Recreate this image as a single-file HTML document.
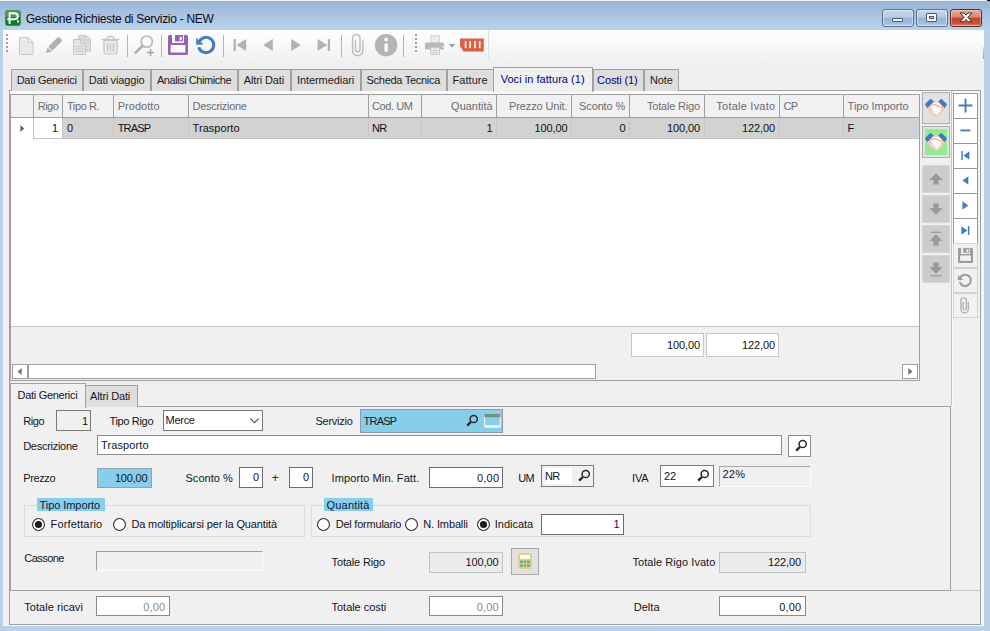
<!DOCTYPE html>
<html><head><meta charset="utf-8"><title>Gestione Richieste di Servizio - NEW</title>
<style>
html,body{margin:0;padding:0;}
body{width:990px;height:631px;overflow:hidden;position:relative;background:#b9d1ea;font-family:"Liberation Sans", sans-serif;}
.b{position:absolute;box-sizing:border-box;display:block;}
.t{position:absolute;white-space:pre;font-family:"Liberation Sans", sans-serif;}
</style></head><body>
<div class="b" style="left:0px;top:0px;width:990px;height:31px;background:linear-gradient(#98b3d3 0px,#9eb9d8 7px,#a4bfdd 9.5px,#afc8e4 20px,#b9d2ec 30px);"></div>
<div class="b" style="left:0px;top:0px;width:990px;height:1px;background:#eef3fa;"></div>
<div class="b" style="left:987px;top:0px;width:3px;height:1px;background:#0c1418;"></div>
<div class="b" style="left:988px;top:1px;width:2px;height:1px;background:#8fb5c8;"></div>
<svg class="b" style="left:5px;top:10px" width="16" height="16" viewBox="0 0 16 16"><rect x="0.3" y="0.3" width="15.4" height="15.4" rx="2" fill="#127a2e"/>
<path d="M0.3 7V2.3a2 2 0 0 1 2-2h11.4a2 2 0 0 1 2 2V7z" fill="#4f9a57"/>
<path d="M4.6 14V3.2h4.6c2.6 0 3.6 1.3 3.6 3s-1 3-3.6 3H2.2" fill="none" stroke="#fff" stroke-width="1.9"/>
<rect x="12" y="10.4" width="2" height="2" fill="#fff"/></svg>
<div class="b" style="left:882px;top:9px;width:32px;height:18px;border:1px solid #5c6f8c;border-radius:3px;background:linear-gradient(#c3d6ee 0,#b5cbe7 45%,#98b3d4 50%,#a3bddb 85%,#b9d0ea 100%);box-shadow:inset 0 0 0 1px rgba(255,255,255,.45);"></div>
<div class="b" style="left:916px;top:9px;width:32px;height:18px;border:1px solid #5c6f8c;border-radius:3px;background:linear-gradient(#c3d6ee 0,#b5cbe7 45%,#98b3d4 50%,#a3bddb 85%,#b9d0ea 100%);box-shadow:inset 0 0 0 1px rgba(255,255,255,.45);"></div>
<div class="b" style="left:950px;top:9px;width:32px;height:18px;border:1px solid #5a2a2a;border-radius:3px;background:linear-gradient(#e9a99a 0,#d98472 45%,#c2432a 50%,#c8553a 85%,#dc8a72 100%);box-shadow:inset 0 0 0 1px rgba(255,255,255,.35);"></div>
<div class="b" style="left:892px;top:18px;width:11px;height:4px;background:#f4f4f4;border:1px solid #4e5b70;border-radius:1px;"></div>
<div class="b" style="left:926px;top:13px;width:11px;height:9px;background:#f4f4f4;border:1px solid #4e5b70;border-radius:1px;"></div>
<div class="b" style="left:929px;top:16px;width:5px;height:3px;background:#a9c0dd;border:1px solid #4e5b70;"></div>
<svg class="b" style="left:959px;top:12px" width="14" height="11" viewBox="0 0 14 11"><path d="M1.2 1h3.9l1.9 2.1 1.9-2.1h3.9L8.9 5.3 12.8 9.7H8.9L7 7.5 5.1 9.7H1.2l3.9-4.4z" fill="#f8f8f8" stroke="#4a3038" stroke-width="1"/></svg>
<div class="b" style="left:3px;top:30px;width:981px;height:596px;background:#f0f0f0;"></div>
<div class="b" style="left:3px;top:30px;width:981px;height:33px;background:linear-gradient(#fdfdfd 0,#f9f9f9 40%,#f0f0f0 100%);"></div>
<div class="b" style="left:983px;top:47px;width:1px;height:12px;background:linear-gradient(#d8d8d8,#9a9a9a);"></div>
<div class="b" style="left:981px;top:90px;width:3px;height:536px;background:#f6f6f6;"></div>
<div class="b" style="left:3px;top:625px;width:981px;height:1px;background:#f8f8f8;"></div>
<div class="b" style="left:6px;top:34px;width:2px;height:2px;background:#a0a0a0;"></div>
<div class="b" style="left:6px;top:38px;width:2px;height:2px;background:#a0a0a0;"></div>
<div class="b" style="left:6px;top:42px;width:2px;height:2px;background:#a0a0a0;"></div>
<div class="b" style="left:6px;top:46px;width:2px;height:2px;background:#a0a0a0;"></div>
<div class="b" style="left:6px;top:50px;width:2px;height:2px;background:#a0a0a0;"></div>
<div class="b" style="left:415px;top:34px;width:2px;height:2px;background:#a0a0a0;"></div>
<div class="b" style="left:415px;top:38px;width:2px;height:2px;background:#a0a0a0;"></div>
<div class="b" style="left:415px;top:42px;width:2px;height:2px;background:#a0a0a0;"></div>
<div class="b" style="left:415px;top:46px;width:2px;height:2px;background:#a0a0a0;"></div>
<div class="b" style="left:415px;top:50px;width:2px;height:2px;background:#a0a0a0;"></div>
<svg class="b" style="left:18px;top:36px" width="17" height="20" viewBox="0 0 17 20"><path d="M1.5 1.5h8.5l5 5v12h-13.5z" fill="#e9e9e9" stroke="#c9c9c9"/><path d="M10 1.5v5h5z" fill="#f6f6f6" stroke="#c9c9c9"/></svg>
<svg class="b" style="left:44px;top:35px" width="20" height="20" viewBox="0 0 20 20"><g transform="translate(9.4,10.6) rotate(45)"><path d="M-2.8 -8.6a1.4 1.4 0 0 1 1.4-1.4h2.8a1.4 1.4 0 0 1 1.4 1.4V4.4h-5.6z" fill="#b0b0b0"/><path d="M-2.8 5.4h5.6L0 10.6z" fill="#b0b0b0"/></g></svg>
<svg class="b" style="left:72px;top:34px" width="20" height="22" viewBox="0 0 20 22"><path d="M6.5 1.5h7.5l4.5 4.5v11h-12z" fill="#dcdcdc" stroke="#c6c6c6"/><path d="M14 1.5v4.5h4.5z" fill="#ededed" stroke="#c6c6c6"/>
<path d="M1.5 5.5h7.5l4.5 4.5v10.5h-12z" fill="#e4e4e4" stroke="#c6c6c6"/><path d="M9 5.5v4.5h4.5z" fill="#f1f1f1" stroke="#c6c6c6"/>
<path d="M3.5 12.5h8M3.5 15h8M3.5 17.5h8" stroke="#c8c8c8" stroke-width="1.2"/></svg>
<svg class="b" style="left:101px;top:35px" width="19" height="20" viewBox="0 0 19 20"><path d="M0.5 4.5h18" stroke="#c4c4c4" stroke-width="1.3"/><path d="M6 4.2c0-2 1-2.7 3.5-2.7s3.5 0.7 3.5 2.7" fill="none" stroke="#c4c4c4" stroke-width="1.3"/>
<path d="M3 5.5h13v11.5a2 2 0 0 1-2 2h-9a2 2 0 0 1-2-2z" fill="#ececec" stroke="#c4c4c4" stroke-width="1.2"/>
<path d="M6.6 8v8.5M9.5 8v8.5M12.4 8v8.5" stroke="#c4c4c4" stroke-width="1.4"/></svg>
<div class="b" style="left:127px;top:35px;width:1px;height:22px;background:#b4b4b4;"></div>
<div class="b" style="left:161px;top:35px;width:1px;height:22px;background:#b4b4b4;"></div>
<div class="b" style="left:223px;top:35px;width:1px;height:22px;background:#b4b4b4;"></div>
<div class="b" style="left:341px;top:35px;width:1px;height:22px;background:#b4b4b4;"></div>
<div class="b" style="left:403px;top:35px;width:1px;height:22px;background:#b4b4b4;"></div>
<svg class="b" style="left:134px;top:34px" width="21" height="22" viewBox="0 0 21 22"><circle cx="12.8" cy="7.6" r="5.6" fill="#fbfbfb" stroke="#b9b9b9" stroke-width="1.7"/>
<path d="M8.6 11.8L1.6 18.6" stroke="#b0b0b0" stroke-width="2.6" stroke-linecap="round"/>
<path d="M13 18.5h7M16.5 15v7" stroke="#a8a8a8" stroke-width="1.5"/></svg>
<svg class="b" style="left:168px;top:35px" width="20" height="20" viewBox="0 0 20 20"><path d="M1.6 0h16.8a1.6 1.6 0 0 1 1.6 1.6v16.8a1.6 1.6 0 0 1-1.6 1.6h-16.8a1.6 1.6 0 0 1-1.6-1.6v-16.8a1.6 1.6 0 0 1 1.6-1.6z" fill="#9661b0"/>
<rect x="4" y="0" width="12" height="8" fill="#fcfcfc"/><rect x="7" y="0" width="8" height="6.4" fill="#9661b0"/><rect x="11.6" y="1.8" width="2.2" height="3.6" fill="#fcfcfc"/>
<rect x="2.6" y="10" width="14.8" height="7.5" fill="#fcfcfc"/></svg>
<svg class="b" style="left:195px;top:35px" width="22" height="21" viewBox="0 0 22 21"><path d="M4.4 6.2A7.65 7.65 0 1 1 3.74 12.24" fill="none" stroke="#437fbc" stroke-width="3.1"/>
<path d="M1.2 2.7V9.8L8.7 9.6z" fill="#437fbc"/></svg>
<svg class="b" style="left:233px;top:39px" width="14" height="12" viewBox="0 0 14 12"><rect x="0.6" y="0" width="2.2" height="12" fill="#b2b2b2"/><path d="M13.2 0v12L3.6 6z" fill="#b2b2b2"/></svg>
<svg class="b" style="left:263px;top:39px" width="10" height="12" viewBox="0 0 10 12"><path d="M9.8 0v12L0.2 6z" fill="#b2b2b2"/></svg>
<svg class="b" style="left:291px;top:39px" width="10" height="12" viewBox="0 0 10 12"><path d="M0.2 0v12L9.8 6z" fill="#b2b2b2"/></svg>
<svg class="b" style="left:317px;top:39px" width="14" height="12" viewBox="0 0 14 12"><rect x="10.8" y="0" width="2.2" height="12" fill="#b2b2b2"/><path d="M0.6 0v12L10.2 6z" fill="#b2b2b2"/></svg>
<svg class="b" style="left:350px;top:32px" width="16" height="26" viewBox="0 0 16 26"><path d="M5.5 8.3V17.4A2.25 2.25 0 0 0 10 17.4V6.2A3.75 3.75 0 0 0 2.5 6.2V18.6A5.15 5.15 0 0 0 12.8 18.6V8.3" fill="none" stroke="#bcbcbc" stroke-width="1.4"/></svg>
<svg class="b" style="left:374px;top:33px" width="24" height="24" viewBox="0 0 24 24"><circle cx="12.1" cy="12.2" r="11.2" fill="#b4b4b4"/><rect x="10.5" y="10.6" width="3.4" height="8.2" fill="#fbfbfb"/><circle cx="12.1" cy="6.4" r="1.9" fill="#fbfbfb"/></svg>
<svg class="b" style="left:424px;top:35px" width="23" height="20" viewBox="0 0 23 20"><rect x="6.7" y="0.8" width="8.8" height="7" fill="#ececec" stroke="#d2d2d2"/>
<path d="M2.6 7.4h15.8a1.6 1.6 0 0 1 1.6 1.6v5.6h-19V9a1.6 1.6 0 0 1 1.6-1.6z" fill="#b9b9b9"/>
<rect x="6.7" y="12.7" width="8.8" height="6.6" fill="#ededed" stroke="#c6c6c6"/><path d="M8.4 15.2h5.4M8.4 17.3h5.4" stroke="#c6c6c6" stroke-width="0.9"/><rect x="18" y="11.4" width="1.4" height="1.4" fill="#f4f4f4"/></svg>
<svg class="b" style="left:449px;top:44px" width="6" height="4" viewBox="0 0 6 4"><path d="M0 0h6L3 3.4z" fill="#9a9a9a"/></svg>
<svg class="b" style="left:460px;top:38px" width="24" height="15" viewBox="0 0 24 15"><path d="M0 0.4h23.8v12.6a0.6 0.6 0 0 1-0.6 0.6h-1l-0.5 0.7-0.6-0.7H3.6L0 7.9z" fill="#d96140"/>
<path d="M5.6 3v7.2M10.1 3v7.2M15 3v7.2M19.7 3v7.2" stroke="#fdf3ee" stroke-width="1.7"/></svg>
<div class="b" style="left:488px;top:30px;width:1px;height:29px;background:#dedede;"></div>
<div class="b" style="left:412px;top:31px;width:1px;height:28px;background:#f4f4f4;"></div>
<div class="b" style="left:9px;top:90px;width:972px;height:535px;background:#f0f0f0;border:1px solid #a0a0a0;"></div>
<div class="b" style="left:10px;top:91px;width:970px;height:3px;background:#f9f9f9;"></div>
<div class="b" style="left:11px;top:69px;width:72px;height:22px;background:#dedede;border:1px solid #a0a0a0;border-bottom:none;"></div>
<div class="b" style="left:83px;top:69px;width:68px;height:22px;background:#dedede;border:1px solid #a0a0a0;border-bottom:none;"></div>
<div class="b" style="left:151px;top:69px;width:87px;height:22px;background:#dedede;border:1px solid #a0a0a0;border-bottom:none;"></div>
<div class="b" style="left:238px;top:69px;width:53px;height:22px;background:#dedede;border:1px solid #a0a0a0;border-bottom:none;"></div>
<div class="b" style="left:291px;top:69px;width:70px;height:22px;background:#dedede;border:1px solid #a0a0a0;border-bottom:none;"></div>
<div class="b" style="left:361px;top:69px;width:86px;height:22px;background:#dedede;border:1px solid #a0a0a0;border-bottom:none;"></div>
<div class="b" style="left:447px;top:69px;width:47px;height:22px;background:#dedede;border:1px solid #a0a0a0;border-bottom:none;"></div>
<div class="b" style="left:593px;top:69px;width:51px;height:22px;background:#dedede;border:1px solid #a0a0a0;border-bottom:none;"></div>
<div class="b" style="left:644px;top:69px;width:35px;height:22px;background:#dedede;border:1px solid #a0a0a0;border-bottom:none;"></div>
<div class="b" style="left:493px;top:67px;width:100px;height:25px;background:#f0f0f0;border:1px solid #a0a0a0;border-bottom:none;"></div>
<div class="b" style="left:10px;top:94px;width:910px;height:287px;background:#fff;border:1px solid #a0a0a0;"></div>
<div class="b" style="left:11px;top:95px;width:908px;height:22px;background:#f1f1f1;"></div>
<div class="b" style="left:11px;top:117px;width:908px;height:1px;background:#a0a0a0;"></div>
<div class="b" style="left:33px;top:95px;width:1px;height:22px;background:#a0a0a0;"></div>
<div class="b" style="left:62px;top:95px;width:1px;height:22px;background:#a0a0a0;"></div>
<div class="b" style="left:113px;top:95px;width:1px;height:22px;background:#a0a0a0;"></div>
<div class="b" style="left:188px;top:95px;width:1px;height:22px;background:#a0a0a0;"></div>
<div class="b" style="left:368px;top:95px;width:1px;height:22px;background:#a0a0a0;"></div>
<div class="b" style="left:421px;top:95px;width:1px;height:22px;background:#a0a0a0;"></div>
<div class="b" style="left:496px;top:95px;width:1px;height:22px;background:#a0a0a0;"></div>
<div class="b" style="left:571px;top:95px;width:1px;height:22px;background:#a0a0a0;"></div>
<div class="b" style="left:629px;top:95px;width:1px;height:22px;background:#a0a0a0;"></div>
<div class="b" style="left:704px;top:95px;width:1px;height:22px;background:#a0a0a0;"></div>
<div class="b" style="left:779px;top:95px;width:1px;height:22px;background:#a0a0a0;"></div>
<div class="b" style="left:843px;top:95px;width:1px;height:22px;background:#a0a0a0;"></div>
<div class="b" style="left:62px;top:118px;width:857px;height:20px;background:#d2d2d2;"></div>
<div class="b" style="left:33px;top:138px;width:886px;height:1px;background:#c4c4c4;"></div>
<div class="b" style="left:113px;top:118px;width:1px;height:20px;background:#c6c6c6;"></div>
<div class="b" style="left:188px;top:118px;width:1px;height:20px;background:#c6c6c6;"></div>
<div class="b" style="left:368px;top:118px;width:1px;height:20px;background:#c6c6c6;"></div>
<div class="b" style="left:421px;top:118px;width:1px;height:20px;background:#c6c6c6;"></div>
<div class="b" style="left:496px;top:118px;width:1px;height:20px;background:#c6c6c6;"></div>
<div class="b" style="left:571px;top:118px;width:1px;height:20px;background:#c6c6c6;"></div>
<div class="b" style="left:629px;top:118px;width:1px;height:20px;background:#c6c6c6;"></div>
<div class="b" style="left:704px;top:118px;width:1px;height:20px;background:#c6c6c6;"></div>
<div class="b" style="left:779px;top:118px;width:1px;height:20px;background:#c6c6c6;"></div>
<div class="b" style="left:843px;top:118px;width:1px;height:20px;background:#c6c6c6;"></div>
<div class="b" style="left:33px;top:118px;width:1px;height:21px;background:#c4c4c4;"></div>
<div class="b" style="left:62px;top:118px;width:1px;height:20px;background:#c4c4c4;"></div>
<svg class="b" style="left:20px;top:125px" width="5" height="7" viewBox="0 0 5 7"><path d="M0.3 0v7L4.3 3.5z" fill="#666"/></svg>
<div class="b" style="left:11px;top:326px;width:908px;height:54px;background:#f0f0f0;"></div>
<div class="b" style="left:11px;top:326px;width:908px;height:1px;background:#c8c8c8;"></div>
<div class="b" style="left:631px;top:333px;width:73px;height:24px;background:#fff;border:1px solid #c6c6c6;"></div>
<div class="b" style="left:706px;top:333px;width:73px;height:24px;background:#fff;border:1px solid #c6c6c6;"></div>
<div class="b" style="left:12px;top:364px;width:16px;height:15px;background:#fff;border:1px solid #a0a0a0;"></div>
<div class="b" style="left:28px;top:364px;width:568px;height:15px;background:#fff;border:1px solid #a0a0a0;"></div>
<div class="b" style="left:902px;top:364px;width:16px;height:15px;background:#fff;border:1px solid #a0a0a0;"></div>
<svg class="b" style="left:17px;top:368px" width="5" height="7" viewBox="0 0 5 7"><path d="M4.7 0v7L0.5 3.5z" fill="#707070"/></svg>
<svg class="b" style="left:908px;top:368px" width="5" height="7" viewBox="0 0 5 7"><path d="M0.3 0v7L4.5 3.5z" fill="#707070"/></svg>
<div class="b" style="left:922px;top:92px;width:28px;height:32px;background:#e1e1e1;border:1px solid #adadad;"></div>
<svg class="b" style="left:924px;top:98px" width="24" height="20" viewBox="0 0 24 20"><path d="M0.85 6.3L6.55 0.8 10 3.4 3.4 10.3z" fill="#4579b8"/><path d="M23.1 6.3L17.4 0.8 14 3.4 20.6 10.3z" fill="#4579b8"/>
<path d="M3.4 10.3L10 3.5h4.1L20.6 10.3 19.7 12.9 17.7 15.2 14.8 17.8 12.8 18.9c-0.5 0.2-1 0.1-1.4-0.2L7.4 16.1 4.6 13.2z" fill="#efc9bc"/>
<path d="M8.6 5.4L14.6 4.4 18 8.6 16.6 12.6 12.5 17.2 9.2 12.8 7.2 8.6z" fill="#fffdfc"/>
<path d="M8.2 8c1.2-1.7 3.1-2.1 4.5-0.7l1.5 0.9c1.4 0.2 2.7 0.5 3.9 1" fill="none" stroke="#e0a896" stroke-width="1.1"/>
<path d="M5.6 11.4l3.2 4.6M7.2 10.6l3.8 5.6M14.4 16.6l3-3.4M16 11.6l1.6 1.8" fill="none" stroke="#fff" stroke-width="0.7" stroke-dasharray="1 1.1"/></svg>
<div class="b" style="left:922px;top:126px;width:28px;height:32px;background:#e1e1e1;border:1px solid #adadad;"></div>
<div class="b" style="left:925px;top:129px;width:22px;height:26px;background:#90ee90;"></div>
<svg class="b" style="left:924px;top:131.5px" width="24" height="20" viewBox="0 0 24 20"><path d="M0.85 6.3L6.55 0.8 10 3.4 3.4 10.3z" fill="#4579b8"/><path d="M23.1 6.3L17.4 0.8 14 3.4 20.6 10.3z" fill="#4579b8"/>
<path d="M3.4 10.3L10 3.5h4.1L20.6 10.3 19.7 12.9 17.7 15.2 14.8 17.8 12.8 18.9c-0.5 0.2-1 0.1-1.4-0.2L7.4 16.1 4.6 13.2z" fill="#efc9bc"/>
<path d="M8.6 5.4L14.6 4.4 18 8.6 16.6 12.6 12.5 17.2 9.2 12.8 7.2 8.6z" fill="#fffdfc"/>
<path d="M8.2 8c1.2-1.7 3.1-2.1 4.5-0.7l1.5 0.9c1.4 0.2 2.7 0.5 3.9 1" fill="none" stroke="#e0a896" stroke-width="1.1"/>
<path d="M5.6 11.4l3.2 4.6M7.2 10.6l3.8 5.6M14.4 16.6l3-3.4M16 11.6l1.6 1.8" fill="none" stroke="#fff" stroke-width="0.7" stroke-dasharray="1 1.1"/></svg>
<div class="b" style="left:922px;top:165px;width:28px;height:28px;background:#cccccc;border:1px solid #d6d6d6;"></div>
<div class="b" style="left:922px;top:195px;width:28px;height:28px;background:#cccccc;border:1px solid #d6d6d6;"></div>
<div class="b" style="left:922px;top:225px;width:28px;height:28px;background:#cccccc;border:1px solid #d6d6d6;"></div>
<div class="b" style="left:922px;top:255px;width:28px;height:28px;background:#cccccc;border:1px solid #d6d6d6;"></div>
<svg class="b" style="left:929px;top:173px" width="14" height="12" viewBox="0 0 14 12"><path d="M7 0.3L0.2 7h4.2v4.6h5.2V7h4.2z" fill="#9a9a9a"/></svg>
<svg class="b" style="left:929px;top:203px" width="14" height="12" viewBox="0 0 14 12"><path d="M7 11.7L0.2 5h4.2V0.4h5.2V5h4.2z" fill="#9a9a9a"/></svg>
<svg class="b" style="left:929px;top:231px" width="14" height="15" viewBox="0 0 14 15"><rect x="1.5" y="0.6" width="11" height="1.3" fill="#9a9a9a"/><path d="M7 3.3L0.2 10h4.2v4.6h5.2V10h4.2z" fill="#9a9a9a"/></svg>
<svg class="b" style="left:929px;top:262px" width="14" height="15" viewBox="0 0 14 15"><rect x="1.5" y="13.1" width="11" height="1.3" fill="#9a9a9a"/><path d="M7 11.7L0.2 5h4.2V0.4h5.2V5h4.2z" fill="#9a9a9a"/></svg>
<div class="b" style="left:951px;top:91px;width:1px;height:315px;background:#c4c4c4;"></div>
<div class="b" style="left:952px;top:91px;width:1px;height:315px;background:#fafafa;"></div>
<div class="b" style="left:953px;top:93px;width:25px;height:151px;background:#fff;border:1px solid #9a9a9a;"></div>
<div class="b" style="left:954px;top:118px;width:23px;height:1px;background:#989898;"></div>
<div class="b" style="left:954px;top:143px;width:23px;height:1px;background:#989898;"></div>
<div class="b" style="left:954px;top:168px;width:23px;height:1px;background:#989898;"></div>
<div class="b" style="left:954px;top:193px;width:23px;height:1px;background:#989898;"></div>
<div class="b" style="left:954px;top:218px;width:23px;height:1px;background:#989898;"></div>
<svg class="b" style="left:958px;top:98px" width="15" height="15" viewBox="0 0 15 15"><path d="M0.6 7.5h13.8M7.5 0.6v13.8" stroke="#427fc2" stroke-width="1.9"/></svg>
<svg class="b" style="left:960px;top:129px" width="11" height="3" viewBox="0 0 11 3"><rect x="0.4" y="0.5" width="10" height="1.9" fill="#427fc2"/></svg>
<svg class="b" style="left:961px;top:151px" width="9" height="9" viewBox="0 0 9 9"><rect x="0.3" y="0" width="1.5" height="9" fill="#427fc2"/><path d="M8.4 0.2v8.6L2.4 4.5z" fill="#427fc2"/></svg>
<svg class="b" style="left:962px;top:176px" width="7" height="9" viewBox="0 0 7 9"><path d="M6.4 0.2v8.6L0.4 4.5z" fill="#427fc2"/></svg>
<svg class="b" style="left:962px;top:201px" width="7" height="9" viewBox="0 0 7 9"><path d="M0.4 0.2v8.6L6.4 4.5z" fill="#427fc2"/></svg>
<svg class="b" style="left:961px;top:226px" width="9" height="9" viewBox="0 0 9 9"><rect x="6.9" y="0" width="1.5" height="9" fill="#427fc2"/><path d="M0.4 0.2v8.6L6.4 4.5z" fill="#427fc2"/></svg>
<div class="b" style="left:953px;top:243px;width:25px;height:25px;background:#f1f1f1;border:1px solid #d2d2d2;"></div>
<div class="b" style="left:953px;top:268px;width:25px;height:25px;background:#f1f1f1;border:1px solid #d2d2d2;"></div>
<div class="b" style="left:953px;top:293px;width:25px;height:25px;background:#f1f1f1;border:1px solid #d2d2d2;"></div>
<svg class="b" style="left:958px;top:248px" width="15" height="15" viewBox="0 0 15 15"><g transform="scale(0.75)"><path d="M1.6 0h16.8a1.6 1.6 0 0 1 1.6 1.6v16.8a1.6 1.6 0 0 1-1.6 1.6h-16.8a1.6 1.6 0 0 1-1.6-1.6v-16.8a1.6 1.6 0 0 1 1.6-1.6z" fill="#9c9c9c"/>
<rect x="4" y="0" width="12" height="8" fill="#f1f1f1"/><rect x="7" y="0" width="8" height="6.4" fill="#9c9c9c"/><rect x="11.4" y="1.8" width="2.4" height="3.6" fill="#f1f1f1"/>
<rect x="2.8" y="10" width="14.4" height="7.2" fill="#f1f1f1"/></g></svg>
<svg class="b" style="left:957px;top:273px" width="17" height="16" viewBox="0 0 17 16"><g transform="scale(0.74)"><path d="M4.4 6.2A7.65 7.65 0 1 1 3.74 12.24" fill="none" stroke="#9c9c9c" stroke-width="2.9"/>
<path d="M1.2 2.7V9.8L8.7 9.6z" fill="#9c9c9c"/></g></svg>
<svg class="b" style="left:959px;top:296px" width="12" height="18" viewBox="0 0 12 18"><g transform="translate(0.2,0) scale(0.71)"><path d="M5.5 8.3V17.4A2.25 2.25 0 0 0 10 17.4V6.2A3.75 3.75 0 0 0 2.5 6.2V18.6A5.15 5.15 0 0 0 12.8 18.6V8.3" fill="none" stroke="#a4a4a4" stroke-width="1.6"/></g></svg>
<div class="b" style="left:951px;top:590px;width:29px;height:1px;background:#c4c4c4;"></div>
<div class="b" style="left:10px;top:406px;width:941px;height:185px;background:#f0f0f0;border:1px solid #a0a0a0;"></div>
<div class="b" style="left:85px;top:385px;width:53px;height:22px;background:#dedede;border:1px solid #a0a0a0;border-bottom:none;"></div>
<div class="b" style="left:10px;top:383px;width:76px;height:25px;background:#f0f0f0;border:1px solid #a0a0a0;border-bottom:none;"></div>
<div class="b" style="left:56px;top:410px;width:35px;height:21px;background:#f0f0f0;border:1px solid #7a7a7a;"></div>
<div class="b" style="left:163px;top:410px;width:100px;height:21px;background:#fff;border:1px solid #7a7a7a;"></div>
<svg class="b" style="left:250px;top:418px" width="9" height="6" viewBox="0 0 9 6"><path d="M0.4 0.6L4.5 4.8 8.6 0.6" fill="none" stroke="#444" stroke-width="1.1"/></svg>
<div class="b" style="left:360px;top:409px;width:143px;height:24px;background:#87ceeb;border:1px solid #8a9ca8;"></div>
<svg class="b" style="left:465px;top:413px" width="14" height="14" viewBox="0 0 14 14"><circle cx="8.7" cy="6" r="3.6" fill="#87ceeb" stroke="#262626" stroke-width="1.5"/><path d="M5.8 9L2.2 12.6" stroke="#262626" stroke-width="2.4"/></svg>
<svg class="b" style="left:484px;top:413px" width="17" height="15" viewBox="0 0 17 15"><defs><linearGradient id="wg" x1="0" x2="1"><stop offset="0" stop-color="#7d8a84"/><stop offset="1" stop-color="#5fa06a"/></linearGradient></defs>
<rect x="0.6" y="0.8" width="15.6" height="13.4" rx="1.2" fill="#87ceeb" stroke="#eef6f6" stroke-width="1.2"/>
<rect x="0.4" y="0.6" width="16" height="3.6" fill="url(#wg)"/><rect x="13" y="1" width="3" height="2.4" fill="#e06a55"/>
<rect x="1.2" y="12.2" width="14.4" height="2" fill="#f4fafa"/></svg>
<div class="b" style="left:97px;top:435px;width:685px;height:20px;background:#fff;border:1px solid #8c8c8c;"></div>
<div class="b" style="left:788px;top:435px;width:23px;height:22px;background:#fff;border:1px solid #8c8c8c;"></div>
<svg class="b" style="left:794px;top:438px" width="14" height="14" viewBox="0 0 14 14"><circle cx="8.7" cy="6" r="3.6" fill="#fff" stroke="#262626" stroke-width="1.5"/><path d="M5.8 9L2.2 12.6" stroke="#262626" stroke-width="2.4"/></svg>
<div class="b" style="left:97px;top:468px;width:55px;height:20px;background:#87ceeb;border:1px solid #8fa3b0;"></div>
<div class="b" style="left:239px;top:467px;width:24px;height:21px;background:#fff;border:1px solid #6c6c6c;"></div>
<div class="b" style="left:289px;top:467px;width:24px;height:21px;background:#fff;border:1px solid #6c6c6c;"></div>
<div class="b" style="left:429px;top:467px;width:74px;height:21px;background:#fff;border:1px solid #6c6c6c;"></div>
<div class="b" style="left:541px;top:465px;width:53px;height:22px;background:#f0f0f0;border:1px solid #7a7a7a;"></div>
<div class="b" style="left:545px;top:468px;width:27px;height:16px;background:#fff;"></div>
<svg class="b" style="left:576.7px;top:468.4px" width="14" height="14" viewBox="0 0 14 14"><circle cx="8.7" cy="6" r="3.6" fill="#f0f0f0" stroke="#262626" stroke-width="1.5"/><path d="M5.8 9L2.2 12.6" stroke="#262626" stroke-width="2.4"/></svg>
<div class="b" style="left:660px;top:465px;width:54px;height:22px;background:#fff;border:1px solid #7a7a7a;"></div>
<svg class="b" style="left:696.4px;top:468.4px" width="14" height="14" viewBox="0 0 14 14"><circle cx="8.7" cy="6" r="3.6" fill="#fff" stroke="#262626" stroke-width="1.5"/><path d="M5.8 9L2.2 12.6" stroke="#262626" stroke-width="2.4"/></svg>
<div class="b" style="left:719px;top:466px;width:92px;height:21px;background:#f0f0f0;border:1px solid;border-color:#a8a8a8 #fdfdfd #fdfdfd #a8a8a8;"></div>
<div class="b" style="left:24px;top:505px;width:281px;height:32px;border:1px solid #dcdcdc;"></div>
<div class="b" style="left:37px;top:498px;width:68px;height:13px;background:#87ceeb;"></div>
<div class="b" style="left:311px;top:505px;width:500px;height:32px;border:1px solid #dcdcdc;"></div>
<div class="b" style="left:324px;top:498px;width:49px;height:13px;background:#87ceeb;"></div>
<svg class="b" style="left:32.0px;top:517.5px" width="13" height="13" viewBox="0 0 13 13"><circle cx="6.5" cy="6.5" r="5.95" fill="#fff" stroke="#2e2e2e" stroke-width="1.1"/><circle cx="6.5" cy="6.5" r="3.55" fill="#1c1c1c"/></svg>
<svg class="b" style="left:113.0px;top:517.5px" width="13" height="13" viewBox="0 0 13 13"><circle cx="6.5" cy="6.5" r="5.95" fill="#fff" stroke="#2e2e2e" stroke-width="1.1"/></svg>
<svg class="b" style="left:317.0px;top:517.5px" width="13" height="13" viewBox="0 0 13 13"><circle cx="6.5" cy="6.5" r="5.95" fill="#fff" stroke="#2e2e2e" stroke-width="1.1"/></svg>
<svg class="b" style="left:405.0px;top:517.5px" width="13" height="13" viewBox="0 0 13 13"><circle cx="6.5" cy="6.5" r="5.95" fill="#fff" stroke="#2e2e2e" stroke-width="1.1"/></svg>
<svg class="b" style="left:476.5px;top:517.5px" width="13" height="13" viewBox="0 0 13 13"><circle cx="6.5" cy="6.5" r="5.95" fill="#fff" stroke="#2e2e2e" stroke-width="1.1"/><circle cx="6.5" cy="6.5" r="3.55" fill="#1c1c1c"/></svg>
<div class="b" style="left:541px;top:514px;width:83px;height:21px;background:#fff;border:1px solid #6c6c6c;"></div>
<div class="b" style="left:96px;top:551px;width:167px;height:20px;background:#f0f0f0;border:1px solid;border-color:#9c9c9c #fdfdfd #fdfdfd #9c9c9c;"></div>
<div class="b" style="left:429px;top:552px;width:74px;height:21px;background:#ebebeb;border:1px solid #c2c2c2;"></div>
<div class="b" style="left:511px;top:548px;width:28px;height:27px;background:#e1e1e1;border:1px solid #a8a8a8;"></div>
<svg class="b" style="left:518px;top:553px" width="14" height="16" viewBox="0 0 14 16"><rect x="0" y="0" width="14" height="16" rx="2" fill="#dbd285"/>
<rect x="2" y="2" width="10.2" height="3.8" fill="#fffef6"/>
<g fill="#62a898"><rect x="2.1" y="7.7" width="2.9" height="2.3"/><rect x="6" y="7.7" width="2" height="2.3"/><rect x="9" y="7.7" width="3" height="2.3"/>
<rect x="2.1" y="11.4" width="2.9" height="2.3"/><rect x="6" y="11.4" width="2" height="2.3"/><rect x="9" y="11.4" width="3" height="2.3"/></g></svg>
<div class="b" style="left:719px;top:552px;width:87px;height:21px;background:#ebebeb;border:1px solid #c2c2c2;"></div>
<div class="b" style="left:96px;top:596px;width:74px;height:20px;background:#fff;border:1px solid #8a8a8a;"></div>
<div class="b" style="left:429px;top:596px;width:74px;height:20px;background:#fff;border:1px solid #8a8a8a;"></div>
<div class="b" style="left:719px;top:596px;width:87px;height:20px;background:#fff;border:1px solid #8a8a8a;"></div>
<span class="t" style="left:25.80px;top:11.54px;line-height:15px;font-size:12px;color:#0a0a14;letter-spacing:-0.286px;">Gestione Richieste di Servizio - NEW</span>
<span class="t" style="left:16.70px;top:73.19px;line-height:14px;font-size:11px;color:#1a1a1a;letter-spacing:-0.283px;">Dati Generici</span>
<span class="t" style="left:88.70px;top:73.19px;line-height:14px;font-size:11px;color:#1a1a1a;letter-spacing:-0.140px;">Dati viaggio</span>
<span class="t" style="left:156.90px;top:73.19px;line-height:14px;font-size:11px;color:#1a1a1a;letter-spacing:-0.445px;">Analisi Chimiche</span>
<span class="t" style="left:243.70px;top:73.19px;line-height:14px;font-size:11px;color:#1a1a1a;letter-spacing:-0.116px;">Altri Dati</span>
<span class="t" style="left:296.90px;top:73.19px;line-height:14px;font-size:11px;color:#1a1a1a;letter-spacing:-0.065px;">Intermediari</span>
<span class="t" style="left:366.50px;top:73.19px;line-height:14px;font-size:11px;color:#1a1a1a;letter-spacing:-0.276px;">Scheda Tecnica</span>
<span class="t" style="left:452.40px;top:73.19px;line-height:14px;font-size:11px;color:#1a1a1a;letter-spacing:0.077px;">Fatture</span>
<span class="t" style="left:500.70px;top:72.39px;line-height:14px;font-size:11px;color:#000080;letter-spacing:0.044px;">Voci in fattura (1)</span>
<span class="t" style="left:597.10px;top:73.19px;line-height:14px;font-size:11px;color:#000080;letter-spacing:-0.118px;">Costi (1)</span>
<span class="t" style="left:650.10px;top:73.19px;line-height:14px;font-size:11px;color:#1a1a1a;letter-spacing:-0.188px;">Note</span>
<span class="t" style="left:37.70px;top:98.99px;line-height:14px;font-size:11px;color:#6b6b72;letter-spacing:-0.506px;">Rigo</span>
<span class="t" style="left:66.90px;top:98.99px;line-height:14px;font-size:11px;color:#6b6b72;letter-spacing:-0.378px;">Tipo R.</span>
<span class="t" style="left:117.70px;top:98.99px;line-height:14px;font-size:11px;color:#6b6b72;letter-spacing:0.038px;">Prodotto</span>
<span class="t" style="left:192.60px;top:98.99px;line-height:14px;font-size:11px;color:#6b6b72;letter-spacing:-0.315px;">Descrizione</span>
<span class="t" style="left:372.10px;top:98.99px;line-height:14px;font-size:11px;color:#6b6b72;letter-spacing:-0.415px;">Cod. UM</span>
<span class="t" style="right:497.41px;top:98.99px;line-height:14px;font-size:11px;color:#6b6b72;letter-spacing:-0.012px;">Quantità</span>
<span class="t" style="right:422.52px;top:98.99px;line-height:14px;font-size:11px;color:#6b6b72;letter-spacing:-0.118px;">Prezzo Unit.</span>
<span class="t" style="left:579.10px;top:98.99px;line-height:14px;font-size:11px;color:#6b6b72;letter-spacing:-0.137px;">Sconto %</span>
<span class="t" style="right:290.09px;top:98.99px;line-height:14px;font-size:11px;color:#6b6b72;letter-spacing:-0.186px;">Totale Rigo</span>
<span class="t" style="right:214.67px;top:98.99px;line-height:14px;font-size:11px;color:#6b6b72;letter-spacing:0.228px;">Totale Ivato</span>
<span class="t" style="left:783.60px;top:98.99px;line-height:14px;font-size:11px;color:#6b6b72;letter-spacing:-0.800px;">CP</span>
<span class="t" style="left:847.60px;top:98.99px;line-height:14px;font-size:11px;color:#6b6b72;letter-spacing:-0.029px;">Tipo Importo</span>
<span class="t" style="right:932.52px;top:120.59px;line-height:14px;font-size:11px;color:#101018;letter-spacing:-0.625px;">1</span>
<span class="t" style="left:67.10px;top:120.59px;line-height:14px;font-size:11px;color:#101018;letter-spacing:-0.625px;">0</span>
<span class="t" style="left:117.70px;top:120.59px;line-height:14px;font-size:11px;color:#101018;letter-spacing:-0.800px;">TRASP</span>
<span class="t" style="left:192.60px;top:120.59px;line-height:14px;font-size:11px;color:#101018;letter-spacing:0.036px;">Trasporto</span>
<span class="t" style="left:372.10px;top:120.59px;line-height:14px;font-size:11px;color:#101018;letter-spacing:-0.800px;">NR</span>
<span class="t" style="right:498.02px;top:120.59px;line-height:14px;font-size:11px;color:#101018;letter-spacing:-0.625px;">1</span>
<span class="t" style="right:422.51px;top:120.59px;line-height:14px;font-size:11px;color:#101018;letter-spacing:-0.109px;">100,00</span>
<span class="t" style="right:365.02px;top:120.59px;line-height:14px;font-size:11px;color:#101018;letter-spacing:-0.625px;">0</span>
<span class="t" style="right:290.01px;top:120.59px;line-height:14px;font-size:11px;color:#101018;letter-spacing:-0.109px;">100,00</span>
<span class="t" style="right:215.01px;top:120.59px;line-height:14px;font-size:11px;color:#101018;letter-spacing:-0.109px;">122,00</span>
<span class="t" style="left:847.60px;top:120.59px;line-height:14px;font-size:11px;color:#101018;letter-spacing:-0.800px;">F</span>
<span class="t" style="right:290.01px;top:338.49px;line-height:14px;font-size:11px;color:#101018;letter-spacing:-0.109px;">100,00</span>
<span class="t" style="right:215.01px;top:338.49px;line-height:14px;font-size:11px;color:#101018;letter-spacing:-0.109px;">122,00</span>
<span class="t" style="left:17.50px;top:387.79px;line-height:14px;font-size:11px;color:#14141e;letter-spacing:-0.291px;">Dati Generici</span>
<span class="t" style="left:90.10px;top:388.79px;line-height:14px;font-size:11px;color:#14141e;letter-spacing:-0.156px;">Altri Dati</span>
<span class="t" style="left:23.20px;top:413.89px;line-height:14px;font-size:11px;color:#14141a;letter-spacing:-0.406px;">Rigo</span>
<span class="t" style="right:902.52px;top:413.89px;line-height:14px;font-size:11px;color:#14141a;letter-spacing:-0.625px;">1</span>
<span class="t" style="left:109.40px;top:413.89px;line-height:14px;font-size:11px;color:#14141a;letter-spacing:-0.319px;">Tipo Rigo</span>
<span class="t" style="left:165.60px;top:412.89px;line-height:14px;font-size:11px;color:#14141a;letter-spacing:-0.293px;">Merce</span>
<span class="t" style="left:315.50px;top:413.89px;line-height:14px;font-size:11px;color:#14141a;letter-spacing:-0.253px;">Servizio</span>
<span class="t" style="left:363.60px;top:413.89px;line-height:14px;font-size:11px;color:#14141a;letter-spacing:-0.800px;">TRASP</span>
<span class="t" style="left:23.20px;top:438.79px;line-height:14px;font-size:11px;color:#14141a;letter-spacing:-0.279px;">Descrizione</span>
<span class="t" style="left:101.10px;top:437.79px;line-height:14px;font-size:11px;color:#14141a;letter-spacing:0.092px;">Trasporto</span>
<span class="t" style="left:23.20px;top:470.89px;line-height:14px;font-size:11px;color:#14141a;letter-spacing:-0.358px;">Prezzo</span>
<span class="t" style="right:842.71px;top:470.89px;line-height:14px;font-size:11px;color:#14141a;letter-spacing:-0.209px;">100,00</span>
<span class="t" style="left:185.50px;top:470.89px;line-height:14px;font-size:11px;color:#14141a;letter-spacing:0.026px;">Sconto %</span>
<span class="t" style="right:731.42px;top:469.89px;line-height:14px;font-size:11px;color:#14141a;letter-spacing:-0.625px;">0</span>
<span class="t" style="left:271.70px;top:470.74px;line-height:15px;font-size:12px;color:#2a2a2a;letter-spacing:-0.016px;">+</span>
<span class="t" style="right:681.42px;top:469.89px;line-height:14px;font-size:11px;color:#14141a;letter-spacing:-0.625px;">0</span>
<span class="t" style="left:331.60px;top:470.89px;line-height:14px;font-size:11px;color:#14141a;letter-spacing:0.083px;">Importo Min. Fatt.</span>
<span class="t" style="right:490.63px;top:470.89px;line-height:14px;font-size:11px;color:#14141a;letter-spacing:0.270px;">0,00</span>
<span class="t" style="left:518.30px;top:470.89px;line-height:14px;font-size:11px;color:#14141a;letter-spacing:-0.800px;">UM</span>
<span class="t" style="left:545.10px;top:468.89px;line-height:14px;font-size:11px;color:#14141a;letter-spacing:-0.800px;">NR</span>
<span class="t" style="left:632.10px;top:470.89px;line-height:14px;font-size:11px;color:#14141a;letter-spacing:-0.207px;">IVA</span>
<span class="t" style="left:664.10px;top:468.89px;line-height:14px;font-size:11px;color:#14141a;letter-spacing:-0.125px;">22</span>
<span class="t" style="left:722.60px;top:466.89px;line-height:14px;font-size:11px;color:#14141a;letter-spacing:0.156px;">22%</span>
<span class="t" style="left:39.60px;top:498.19px;line-height:14px;font-size:11px;color:#14143c;letter-spacing:-0.070px;">Tipo Importo</span>
<span class="t" style="left:326.60px;top:498.19px;line-height:14px;font-size:11px;color:#14143c;letter-spacing:0.176px;">Quantità</span>
<span class="t" style="left:50.60px;top:516.79px;line-height:14px;font-size:11px;color:#14141a;letter-spacing:0.142px;">Forfettario</span>
<span class="t" style="left:131.40px;top:516.79px;line-height:14px;font-size:11px;color:#14141a;letter-spacing:-0.134px;">Da moltiplicarsi per la Quantità</span>
<span class="t" style="left:335.70px;top:516.79px;line-height:14px;font-size:11px;color:#14141a;letter-spacing:-0.219px;">Del formulario</span>
<span class="t" style="left:423.30px;top:516.79px;line-height:14px;font-size:11px;color:#14141a;letter-spacing:-0.134px;">N. Imballi</span>
<span class="t" style="left:494.80px;top:516.79px;line-height:14px;font-size:11px;color:#14141a;letter-spacing:-0.016px;">Indicata</span>
<span class="t" style="right:371.02px;top:516.79px;line-height:14px;font-size:11px;color:#14141a;letter-spacing:-0.625px;">1</span>
<span class="t" style="left:24.30px;top:551.19px;line-height:14px;font-size:11px;color:#14141a;letter-spacing:-0.546px;">Cassone</span>
<span class="t" style="left:331.60px;top:555.19px;line-height:14px;font-size:11px;color:#14141a;letter-spacing:-0.159px;">Totale Rigo</span>
<span class="t" style="right:491.51px;top:555.19px;line-height:14px;font-size:11px;color:#14141a;letter-spacing:-0.109px;">100,00</span>
<span class="t" style="left:632.50px;top:555.19px;line-height:14px;font-size:11px;color:#14141a;letter-spacing:0.057px;">Totale Rigo Ivato</span>
<span class="t" style="right:189.01px;top:555.19px;line-height:14px;font-size:11px;color:#14141a;letter-spacing:-0.109px;">122,00</span>
<span class="t" style="left:24.30px;top:599.59px;line-height:14px;font-size:11px;color:#14141a;letter-spacing:0.040px;">Totale ricavi</span>
<span class="t" style="right:824.76px;top:599.59px;line-height:14px;font-size:11px;color:#8a8a8a;letter-spacing:0.145px;">0,00</span>
<span class="t" style="left:331.60px;top:599.59px;line-height:14px;font-size:11px;color:#14141a;letter-spacing:-0.044px;">Totale costi</span>
<span class="t" style="right:491.26px;top:599.59px;line-height:14px;font-size:11px;color:#8a8a8a;letter-spacing:0.145px;">0,00</span>
<span class="t" style="left:633.70px;top:599.59px;line-height:14px;font-size:11px;color:#14141a;letter-spacing:0.042px;">Delta</span>
<span class="t" style="right:188.76px;top:599.59px;line-height:14px;font-size:11px;color:#14141a;letter-spacing:0.145px;">0,00</span>
</body></html>
